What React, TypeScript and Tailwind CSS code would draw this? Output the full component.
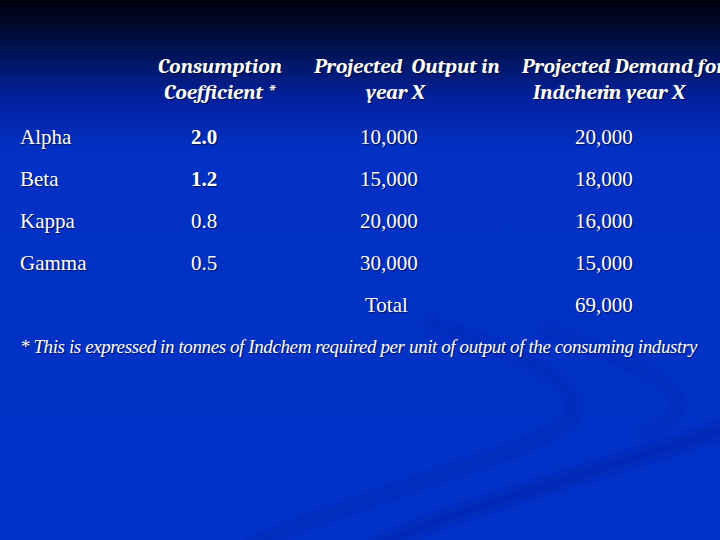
const rows = [
  { name: 'Alpha', coef: '2.0', bold: true, output: '10,000', demand: '20,000' },
  { name: 'Beta', coef: '1.2', bold: true, output: '15,000', demand: '18,000' },
  { name: 'Kappa', coef: '0.8', bold: false, output: '20,000', demand: '16,000' },
  { name: 'Gamma', coef: '0.5', bold: false, output: '30,000', demand: '15,000' },
]

const Swooshes = () => (
  <svg className="absolute inset-0 pointer-events-none" width="720" height="540" viewBox="0 0 720 540">
    <defs>
      <filter id="soft" x="-20%" y="-20%" width="140%" height="140%">
        <feGaussianBlur stdDeviation="3" />
      </filter>
    </defs>
    <g filter="url(#soft)" fill="none" strokeLinecap="round">
      <path d="M430 325 C 520 350, 590 388, 572 416 C 550 448, 420 475, 250 545" stroke="#0022a0" strokeOpacity="0.3" strokeWidth="11" />
      <path d="M545 330 C 625 358, 690 385, 676 412 C 668 424, 655 430, 645 434" stroke="#0022a0" strokeOpacity="0.28" strokeWidth="9" />
      <path d="M726 428 C 640 458, 520 492, 440 520 C 400 535, 380 545, 370 550" stroke="#00209a" strokeOpacity="0.38" strokeWidth="15" />
    </g>
  </svg>
)

export default function App() {
  const shadow = '[text-shadow:1px_1px_1px_rgba(0,0,20,0.6)]'
  return (
    <div className="relative w-[720px] h-[540px] overflow-hidden bg-[linear-gradient(to_bottom,#00000a_0px,#00114a_45px,#0422a0_100px,#0230c4_150px,#0232c8_540px)] text-white">
      <Swooshes />
      <div className={`relative pt-[53px] ${shadow}`}>
        <header className="flex font-serif font-bold italic text-[21px] leading-[26px] whitespace-nowrap">
          <div className="w-[155px] shrink-0" />
          <div className="w-[130px] shrink-0 text-center">
            <div>Consumption</div>
            <div>Coefficient *</div>
          </div>
          <div className="w-[26px] shrink-0" />
          <div className="w-[192px] shrink-0 text-center">
            <div>Projected&nbsp; Output in</div>
            <div className="pr-[24px]">year X</div>
          </div>
          <div className="w-[19px] shrink-0" />
          <div className="w-[220px] shrink-0">
            <div>Projected Demand for</div>
            <div className="pl-[11px]">
              <span>Indchem</span>
              <span className="-ml-[12px]">in</span> year X
            </div>
          </div>
        </header>

        <section className="mt-[11px] px-[20px] text-[21px] font-['Liberation_Serif']">
          {rows.map((r) => (
            <div key={r.name} className="grid grid-cols-[171px_169px_215px_1fr] h-[42px] leading-[42px]">
              <div>{r.name}</div>
              <div className={r.bold ? 'font-bold' : ''}>{r.coef}</div>
              <div>{r.output}</div>
              <div>{r.demand}</div>
            </div>
          ))}
          <div className="grid grid-cols-[171px_169px_215px_1fr] h-[42px] leading-[42px]">
            <div />
            <div />
            <div className="pl-[5px]">Total</div>
            <div>69,000</div>
          </div>
        </section>

        <p className="px-[20px] font-['Liberation_Serif'] italic text-[19px] leading-[42px] tracking-[-0.4px] whitespace-nowrap">
          * This is expressed in tonnes of Indchem required per unit of output of the consuming industry
        </p>
      </div>
    </div>
  )
}
